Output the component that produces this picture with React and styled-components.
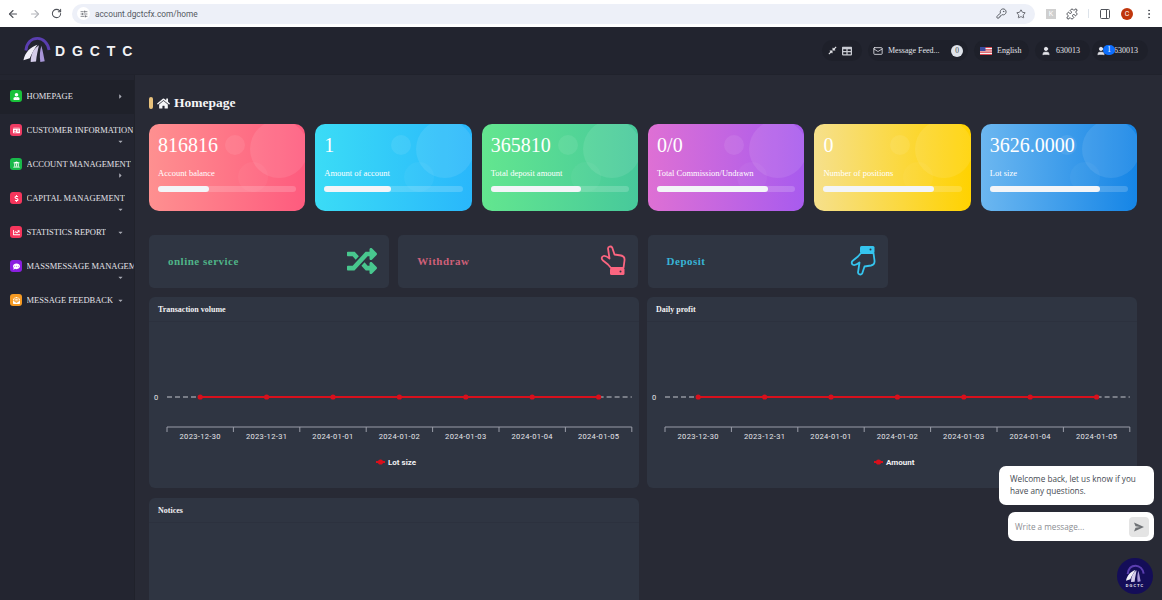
import React from 'react';
import styled, { createGlobalStyle } from 'styled-components';
import {
  ArrowLeft, ArrowRight, RotateCw, KeyRound, Star, Puzzle, PanelRight, MoreVertical, SlidersHorizontal, Mail, User,
} from 'lucide-react';
import {
  FaHome, FaRandom, FaUser, FaIdCard, FaUniversity, FaDollarSign,
  FaChartLine, FaCommentDots, FaEnvelopeOpenText, FaCompressAlt, FaTable, FaCaretRight, FaCaretDown,
} from 'react-icons/fa';

const GlobalStyle = createGlobalStyle`
  html, body {
    margin: 0;
    height: 600px;
    overflow: hidden;
    background: #282a35;
    font-family: "Liberation Serif", serif;
  }
  * { box-sizing: border-box; }
`;

const Page = styled.div`
  position: relative;
  width: 1162px;
  height: 600px;
  overflow: hidden;
  display: flex;
  flex-direction: column;
`;

/* barra do navegador */
const Chrome = styled.div`
  height: 27px;
  flex: none;
  background: #fff;
  display: flex;
  align-items: center;
  padding-left: 7px;
  color: #50535a;
`;

const NavButtons = styled.div`
  display: flex;
  gap: 10px;
  align-items: center;
  width: 65px;
`;

const Omnibox = styled.div`
  width: 963px;
  height: 20px;
  border-radius: 10px;
  background: #edf0f8;
  display: flex;
  align-items: center;
  padding: 0 9px 0 5px;
  gap: 5px;
`;

const SiteChip = styled.span`
  width: 13px;
  height: 13px;
  border-radius: 50%;
  background: #fff;
  display: flex;
  align-items: center;
  justify-content: center;
`;

const Url = styled.span`
  flex: 1;
  font: 8.3px "Roboto", sans-serif;
  color: #555a62;
`;

const ChromeTools = styled.div`
  display: flex;
  align-items: center;
  gap: 10px;
  padding-left: 11px;
`;

const ExtBox = styled.span`
  width: 10px;
  height: 10px;
  background: #cfcfcf;
  color: #fff;
  font: 7px "Roboto", sans-serif;
  text-align: center;
  line-height: 10px;
`;

const ToolDivider = styled.span`
  width: 1px;
  height: 9px;
  background: #dde3ea;
`;

const Avatar = styled.span`
  width: 12px;
  height: 12px;
  border-radius: 50%;
  background: #c0360c;
  color: #fff;
  font: 7px/12px "Roboto", sans-serif;
  text-align: center;
`;

/* cabeçalho */
const TopBar = styled.header`
  height: 48px;
  flex: none;
  background: #22242f;
  border-bottom: 1px solid #20222c;
  display: flex;
  align-items: center;
  justify-content: space-between;
  padding: 0 14px 0 22px;
`;

const Brand = styled.div`
  display: flex;
  align-items: center;
  gap: 4px;
`;

const BrandName = styled.span`
  font: bold 14px "Liberation Sans", sans-serif;
  letter-spacing: 6.9px;
  color: #f2f2f5;
`;

const TopActions = styled.div`
  display: flex;
  align-items: center;
  gap: 6px;
`;

const Pill = styled.div`
  height: 21px;
  width: ${(p) => p.$w}px;
  margin-left: ${(p) => p.$ml || 0}px;
  border-radius: 11px;
  background: #1e202a;
  color: #e4e5ea;
  display: flex;
  align-items: center;
  padding: 0 ${(p) => p.$pad || 6}px;
  gap: 5px;
  font-size: 8px;
  white-space: nowrap;
`;

const CountDot = styled.span`
  margin-left: auto;
  width: 12px;
  height: 12px;
  border-radius: 50%;
  background: #dfe3ea;
  color: #444;
  font-size: 7.5px;
  line-height: 12px;
  text-align: center;
`;

const UserGroup = styled.span`
  position: relative;
  display: flex;
  align-items: center;
  gap: 8px;
`;

const Badge = styled.span`
  position: absolute;
  left: 7px;
  top: -1px;
  width: 12px;
  height: 10px;
  border-radius: 5px;
  background: #0d6efd;
  color: #fff;
  font-size: 7.5px;
  line-height: 10px;
  text-align: center;
`;

const Body = styled.div`
  flex: 1;
  min-height: 0;
  display: flex;
`;

/* menu lateral */
const Sidebar = styled.nav`
  width: 135px;
  flex: none;
  background: #232530;
  border-right: 1px solid #20222b;
  padding-top: 5px;
`;

const MenuItem = styled.div`
  height: 34px;
  display: flex;
  flex-wrap: wrap;
  align-content: flex-start;
  align-items: center;
  padding: 10px 0 0 10px;
  background: ${(p) => (p.$active ? '#1f212a' : 'transparent')};
  color: #e3e3e8;
  font-size: 8.5px;
`;

const MenuIcon = styled.span`
  width: 12px;
  height: 12px;
  flex: none;
  border-radius: 3px;
  background: ${(p) => p.$bg};
  color: #fff;
  display: flex;
  align-items: center;
  justify-content: center;
  font-size: 7px;
  margin-right: 4.5px;
`;

const MenuLabel = styled.span`
  max-width: 107px;
  overflow: hidden;
  white-space: nowrap;
`;

const MenuArrow = styled.span`
  margin-left: auto;
  margin-right: 10px;
  flex: none;
  height: ${(p) => (p.$wrapped ? 9 : 12)}px;
  padding-top: ${(p) => (p.$wrapped ? 2 : 0)}px;
  color: #a7a9b2;
  font-size: 7px;
  display: flex;
  align-items: center;
`;

const Main = styled.main`
  flex: 1;
  min-width: 0;
  padding: 13px 25px 0 14px;
  overflow: hidden;
`;

const Title = styled.h1`
  margin: 0 0 6px;
  height: 30px;
  display: flex;
  align-items: center;
  gap: 4px;
  color: #f5f5f7;
  font-size: 13.5px;
  font-weight: bold;
`;

const TitleMark = styled.span`
  width: 4px;
  height: 12px;
  border-radius: 2px;
  background: #e9c27c;
`;

const StatGrid = styled.section`
  display: grid;
  grid-template-columns: repeat(6, 1fr);
  gap: 10.2px;
`;

const StatCard = styled.article`
  position: relative;
  overflow: hidden;
  height: 87px;
  border-radius: 10px;
  padding: 8px 9px;
  background: linear-gradient(90deg, ${(p) => p.$from}, ${(p) => p.$to});
  color: #fff;
`;

const Bubble = styled.span`
  position: absolute;
  left: ${(p) => p.$x - p.$r}px;
  top: ${(p) => p.$y - p.$r}px;
  width: ${(p) => p.$r * 2}px;
  height: ${(p) => p.$r * 2}px;
  border-radius: 50%;
  background: rgba(255, 255, 255, ${(p) => p.$a});
`;

const StatValue = styled.div`
  position: relative;
  height: 26px;
  font-size: 20px;
  line-height: 26px;
`;

const StatLabel = styled.div`
  position: relative;
  margin-top: 9px;
  height: 12px;
  font-size: 8.5px;
  line-height: 12px;
`;

const Track = styled.div`
  position: relative;
  margin-top: 7px;
  height: 6px;
  border-radius: 3px;
  background: rgba(255, 255, 255, 0.18);
`;

const Fill = styled.div`
  height: 100%;
  border-radius: 3px;
  background: #f3f5f8;
`;

const ActionGrid = styled.section`
  margin-top: 24px;
  display: grid;
  grid-template-columns: repeat(4, 240px);
  gap: 9.3px;
`;

const ActionCard = styled.div`
  height: 53px;
  border-radius: 5px;
  background: #2f3542;
  color: ${(p) => p.$color};
  display: flex;
  align-items: center;
  justify-content: space-between;
  padding: 0 12px 2px 19px;
  font-size: 11px;
  font-weight: bold;
  letter-spacing: 0.5px;
`;

const PanelGrid = styled.section`
  margin-top: 9px;
  display: grid;
  grid-template-columns: 490px 490px;
  gap: 10px 8px;
`;

const Panel = styled.div`
  height: ${(p) => p.$h}px;
  border-radius: 6px;
  background: #2f3542;
`;

const PanelHead = styled.div`
  height: 25px;
  padding: 1px 9px 0;
  display: flex;
  align-items: center;
  border-bottom: 1px solid #2c313e;
  color: #f1f1f3;
  font-size: 8px;
  font-weight: bold;
`;

const ChartSvg = styled.svg`
  display: block;
  font-family: "Roboto", sans-serif;
`;

/* chat */
const ChatDock = styled.aside`
  position: absolute;
  right: 8px;
  top: 466px;
  width: 155px;
  display: flex;
  flex-direction: column;
  align-items: flex-end;
  gap: 7px;
  font-family: "Open Sans", sans-serif;
`;

const ChatBubble = styled.div`
  width: 155px;
  height: 39px;
  border-radius: 7px;
  background: #fff;
  color: #454a52;
  padding: 7px 11px;
  font-size: 8.2px;
  line-height: 12px;
`;

const ChatInput = styled.div`
  width: 146px;
  height: 29px;
  border-radius: 7px;
  background: #fff;
  color: #8b8d92;
  font-size: 8.2px;
  display: flex;
  align-items: center;
  justify-content: space-between;
  padding: 0 5px 0 7px;
`;

const SendBtn = styled.span`
  width: 20px;
  height: 20px;
  border-radius: 4px;
  background: #e4e4e4;
  display: flex;
  align-items: center;
  justify-content: center;
`;

const Launcher = styled.div`
  margin: 10px 1px 0 0;
  width: 36px;
  height: 36px;
  border-radius: 50%;
  background: #140d58;
  color: #fff;
  display: flex;
  flex-direction: column;
  align-items: center;
  justify-content: center;
  font: bold 3.6px "Liberation Sans", sans-serif;
  letter-spacing: 1.1px;
`;

const Logo = ({ size }) => (
  <svg width={size} height={size} viewBox="0 0 30 30">
    <path d="M4 15C5 6.5 10 2.5 16 2.5c6 0 11 5 12 12" fill="none" stroke="#5a3eb0" strokeWidth="3" />
    <path d="M1.5 25C3 17 9 11 16 9c-3 4-6 9-8 14z" fill="#f1eff8" />
    <path d="M9 27C9 19 12 13 17.5 9.5c-1 5-2.5 11-3 17z" fill="#d5cdea" />
    <path d="M19 27c-1-6-.5-12 1-17 1.5 5 2.5 11 3.5 16z" fill="#a896d8" />
  </svg>
);

const FlagUS = () => (
  <svg width="12" height="8" viewBox="0 0 12 8">
    <rect width="12" height="8" fill="#f3f3f3" />
    <path d="M0 0h12v1.1H0zM0 2.3h12v1.1H0zM0 4.6h12v1.1H0zM0 6.9h12V8H0z" fill="#d8434e" />
    <rect width="5.5" height="4" fill="#3c4a9c" />
  </svg>
);

// mão com punho preenchido; flip vira para baixo (Deposit)
const Hand = ({ color, flip }) => (
  <svg width="26" height="31" viewBox="0 0 26 31">
    <g transform={flip ? 'matrix(1 0 0 -1 0 31)' : undefined}>
      <path
        d="M8 3.5C8 1.5 11 .8 12.2 2.5L14.5 9.5 21 10.5C23.5 11 24.8 13 24.5 15.5L23.5 23H11L8 19.5 3 15.5C1 14 1.5 11.5 3.5 11 5 10.6 7 11.5 9.5 13.5z"
        fill="none"
        stroke={color}
        strokeWidth="1.8"
        strokeLinejoin="round"
      />
      <rect x="10" y="23" width="14.5" height="7" rx="1.5" fill={color} />
      <circle cx="20.5" cy="26.5" r="1" fill="#2f3542" />
    </g>
  </svg>
);

const menu = [
  { label: 'Homepage', bg: '#19c23a', icon: <FaUser />, arrow: 'right', active: true },
  { label: 'Customer information', bg: '#ee3c63', icon: <FaIdCard />, arrow: 'down', wrapped: true },
  { label: 'Account management', bg: '#19b94a', icon: <FaUniversity />, arrow: 'right', wrapped: true },
  { label: 'Capital management', bg: '#f5365c', icon: <FaDollarSign />, arrow: 'down', wrapped: true },
  { label: 'Statistics report', bg: '#f5365c', icon: <FaChartLine />, arrow: 'down' },
  { label: 'Massmessage management', bg: '#8a1fe0', icon: <FaCommentDots />, arrow: 'down', wrapped: true },
  { label: 'Message feedback', bg: '#f59a23', icon: <FaEnvelopeOpenText />, arrow: 'down' },
];

const stats = [
  { value: '816816', label: 'Account balance', pct: 37, from: '#fe9090', to: '#fe5b7e' },
  { value: '1', label: 'Amount of account', pct: 48, from: '#3bdcf6', to: '#29b7fb' },
  { value: '365810', label: 'Total deposit amount', pct: 65, from: '#63e68f', to: '#47c99b' },
  { value: '0/0', label: 'Total Commission/Undrawn', pct: 80, from: '#de70d4', to: '#a85bee' },
  { value: '0', label: 'Number of positions', pct: 80, from: '#f6e08c', to: '#ffd200' },
  { value: '3626.0000', label: 'Lot size', pct: 80, from: '#6cb7f0', to: '#1585e6' },
];

const dates = ['2023-12-30', '2023-12-31', '2024-01-01', '2024-01-02', '2024-01-03', '2024-01-04', '2024-01-05'];

const Chart = ({ legend }) => {
  const left = 18;
  const step = 66.4;
  const y0 = 75;
  const axis = 105;
  const right = left + step * 7;
  const first = left + step / 2;
  const last = right - step / 2;
  return (
    <ChartSvg width="490" height="165" viewBox="0 0 490 165">
      <text x="5" y={y0 + 3} fontSize="7.5" fill="#e6e6ea">0</text>
      <line x1={left} x2={first} y1={y0} y2={y0} stroke="#c4c6cc" strokeWidth="1" strokeDasharray="5 3" />
      <line x1={last} x2={right} y1={y0} y2={y0} stroke="#c4c6cc" strokeWidth="1" strokeDasharray="5 3" />
      <line x1={first} x2={last} y1={y0} y2={y0} stroke="#d8101c" strokeWidth="2" />
      {dates.map((d, i) => (
        <circle key={d} cx={first + step * i} cy={y0} r="2.6" fill="#d8101c" />
      ))}
      <line x1={left} x2={right} y1={axis} y2={axis} stroke="#9a9da8" strokeWidth="1" />
      {[...dates, ''].map((d, i) => (
        <line key={i} x1={left + step * i} x2={left + step * i} y1={axis} y2={axis + 5} stroke="#9a9da8" strokeWidth="1" />
      ))}
      {dates.map((d, i) => (
        <text key={d} x={first + step * i} y={axis + 12} fontSize="7.5" letterSpacing="0.35" textAnchor="middle" fill="#e6e6ea">{d}</text>
      ))}
      <g transform="translate(245 140)">
        <line x1="-18" x2="-9" y1="0" y2="0" stroke="#d8101c" strokeWidth="2" />
        <circle cx="-13.5" cy="0" r="2.6" fill="#d8101c" />
        <text x="-6" y="3" fontSize="8" fontWeight="bold" fill="#f2f2f4">{legend}</text>
      </g>
    </ChartSvg>
  );
};

const App = () => (
  <Page>
    <GlobalStyle />
    <Chrome>
      <NavButtons>
        <ArrowLeft size={12} strokeWidth={2.2} />
        <ArrowRight size={12} color="#b4b6bb" strokeWidth={2.2} />
        <RotateCw size={11} strokeWidth={2.2} />
      </NavButtons>
      <Omnibox>
        <SiteChip><SlidersHorizontal size={8} /></SiteChip>
        <Url>account.dgctcfx.com/home</Url>
        <KeyRound size={11} />
        <Star size={10} style={{ marginLeft: 4 }} />
      </Omnibox>
      <ChromeTools>
        <ExtBox>K</ExtBox>
        <Puzzle size={12} />
        <ToolDivider />
        <PanelRight size={12} />
        <Avatar>C</Avatar>
        <MoreVertical size={12} />
      </ChromeTools>
    </Chrome>

    <TopBar>
      <Brand>
        <Logo size={29} />
        <BrandName>DGCTC</BrandName>
      </Brand>
      <TopActions>
        <Pill $w={40} $pad={6}>
          <FaCompressAlt size={9} />
          <FaTable size={10} color="#c9cbd2" />
        </Pill>
        <Pill $w={100} $pad={5}>
          <Mail size={10} />
          <span>Message Feed...</span>
          <CountDot>0</CountDot>
        </Pill>
        <Pill $w={55} $pad={6}>
          <FlagUS />
          <span>English</span>
        </Pill>
        <Pill $w={55} $pad={6}>
          <User size={10} fill="#e4e5ea" />
          <span>630013</span>
        </Pill>
        <Pill $w={56} $ml={-4} $pad={4}>
          <UserGroup>
            <User size={10} fill="#e4e5ea" />
            <Badge>1</Badge>
            <span>630013</span>
          </UserGroup>
        </Pill>
      </TopActions>
    </TopBar>

    <Body>
      <Sidebar>
        {menu.map((m) => (
          <MenuItem key={m.label} $active={m.active}>
            <MenuIcon $bg={m.bg}>{m.icon}</MenuIcon>
            <MenuLabel>{m.label.toUpperCase()}</MenuLabel>
            <MenuArrow $wrapped={m.wrapped}>
              {m.arrow === 'right' ? <FaCaretRight /> : <FaCaretDown />}
            </MenuArrow>
          </MenuItem>
        ))}
      </Sidebar>

      <Main>
        <Title>
          <TitleMark />
          <FaHome size={13} />
          Homepage
        </Title>

        <StatGrid>
          {stats.map((s) => (
            <StatCard key={s.label} $from={s.from} $to={s.to}>
              <Bubble $x={130} $y={25} $r={29} $a={0.09} />
              <Bubble $x={86} $y={21} $r={10} $a={0.08} />
              <Bubble $x={104} $y={53} $r={15} $a={0.04} />
              <StatValue>{s.value}</StatValue>
              <StatLabel>{s.label}</StatLabel>
              <Track>
                <Fill style={{ width: `${s.pct}%` }} />
              </Track>
            </StatCard>
          ))}
        </StatGrid>

        <ActionGrid>
          <ActionCard $color="#4fb488">
            online service
            <FaRandom size={30} color="#48c78e" />
          </ActionCard>
          <ActionCard $color="#cf6079">
            Withdraw
            <Hand color="#fb6580" />
          </ActionCard>
          <ActionCard $color="#38b4d6">
            Deposit
            <Hand color="#35c4ee" flip />
          </ActionCard>
        </ActionGrid>

        <PanelGrid>
          <Panel $h={191}>
            <PanelHead>Transaction volume</PanelHead>
            <Chart legend="Lot size" />
          </Panel>
          <Panel $h={191}>
            <PanelHead>Daily profit</PanelHead>
            <Chart legend="Amount" />
          </Panel>
          <Panel $h={200}>
            <PanelHead>Notices</PanelHead>
          </Panel>
        </PanelGrid>
      </Main>
    </Body>

    <ChatDock>
      <ChatBubble>Welcome back, let us know if you have any questions.</ChatBubble>
      <ChatInput>
        Write a message...
        <SendBtn>
          <svg width="12" height="12" viewBox="0 0 12 12">
            <path d="M1 1.5 11 6 1 10.5 2.5 6.8 7 6 2.5 5.2z" fill="#6f7276" />
          </svg>
        </SendBtn>
      </ChatInput>
      <Launcher>
        <Logo size={20} />
        <span>DGCTC</span>
      </Launcher>
    </ChatDock>
  </Page>
);

export default App;
